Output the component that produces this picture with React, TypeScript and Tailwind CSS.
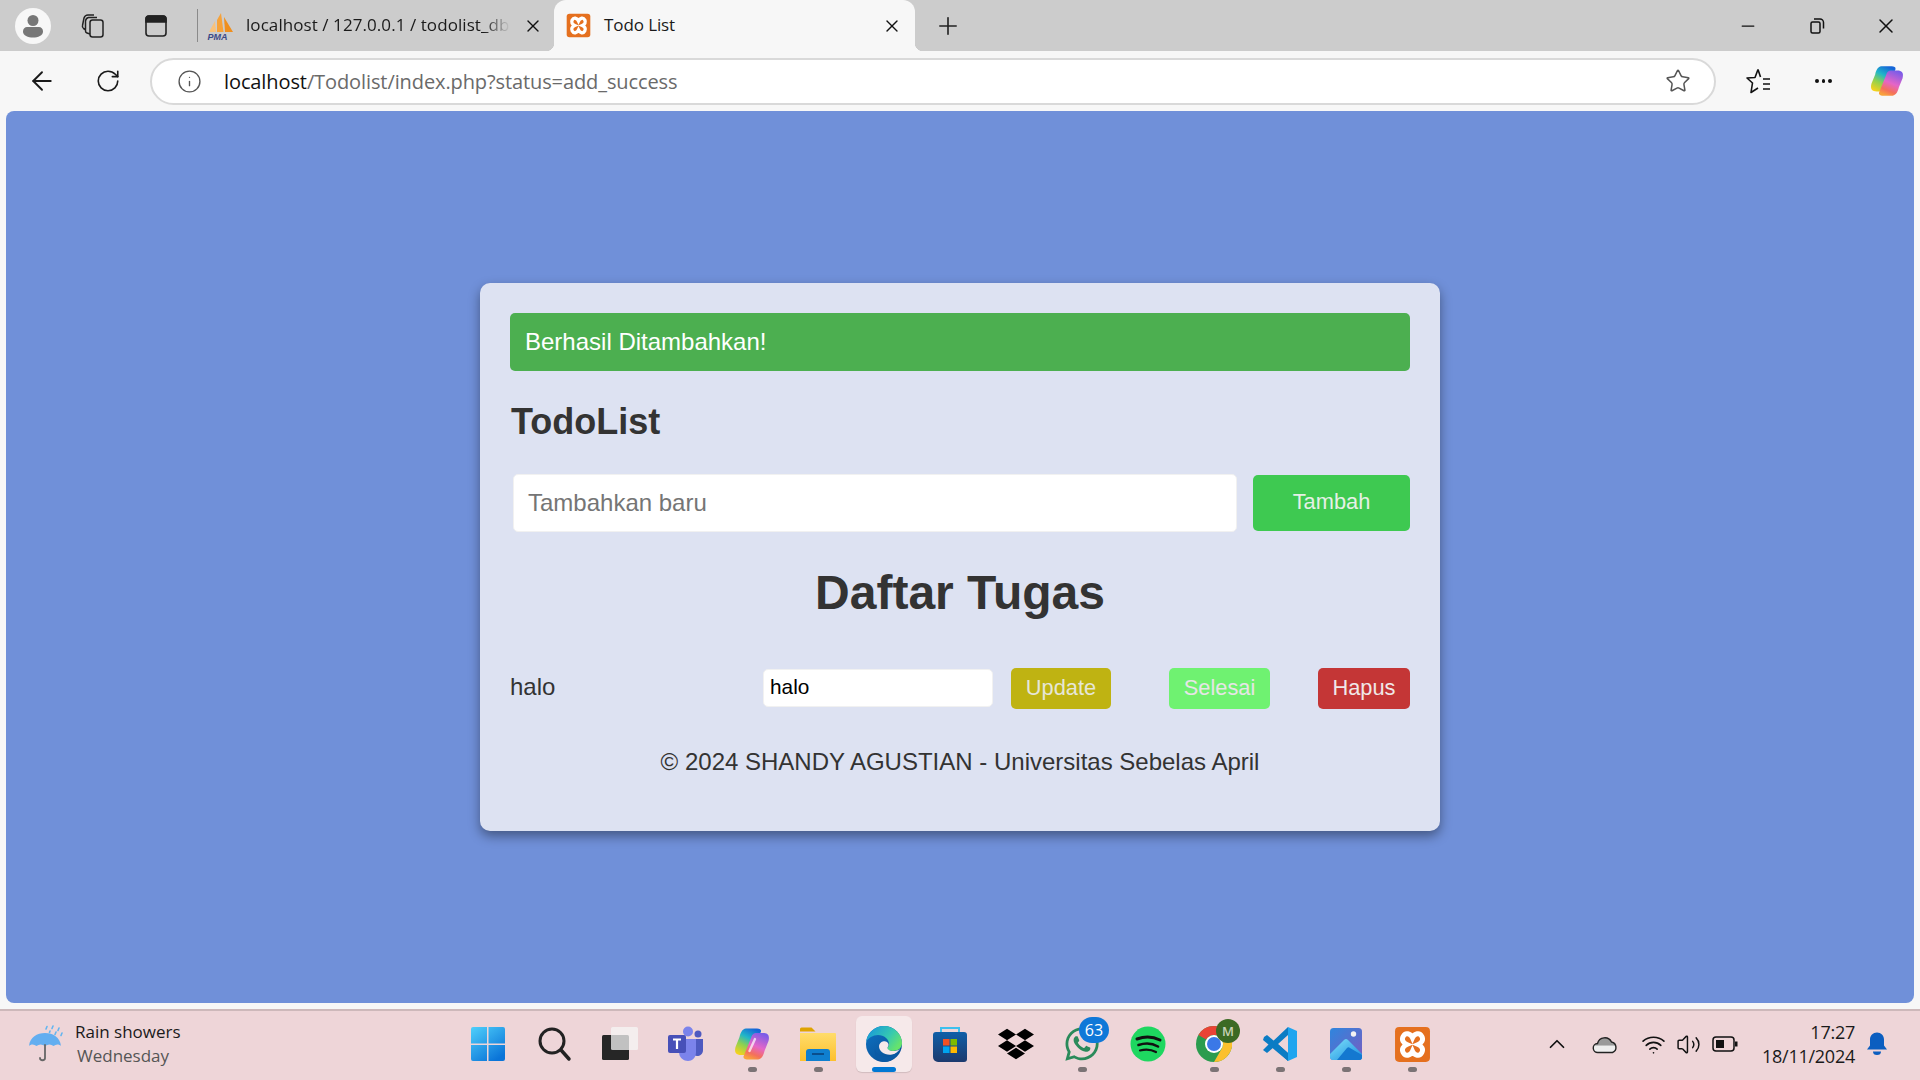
import React from "react";
import { ArrowLeft, RotateCw, Info, Star, Plus, X, Minus, ChevronUp, Wifi, Volume2 } from "lucide-react";
import { FaDropbox, FaWhatsapp } from "react-icons/fa";

const ui = "font-['Open_Sans',sans-serif]";

function Xampp({ s = 36, r = 4 }: { s?: number; r?: number }) {
  return (
    <svg width={s} height={s} viewBox="0 0 36 36">
      <rect x="1" y="1" width="34" height="34" rx={r} fill="#e5701f" />
      <path d="M9 10 C11 6 16 7 18 11.5 C20 7 25 6 27 10 C29 13.5 27 16.5 23.5 18 C27 19.5 29 22.5 27 26 C25 30 20 29 18 24.5 C16 29 11 30 9 26 C7 22.5 9 19.5 12.5 18 C9 16.5 7 13.5 9 10Z" fill="none" stroke="#fff" strokeWidth="4.800" />
    </svg>
  );
}

function Copilot({ s = 36, id = "c", stripe = true }: { s?: number; id?: string; stripe?: boolean }) {
  return (
    <svg width={s} height={s} viewBox="0 0 36 36">
      <defs>
        <linearGradient id={id + "a"} x1="0.7" y1="0" x2="0.2" y2="1">
          <stop offset="0" stopColor="#1565d8" />
          <stop offset="0.35" stopColor="#20b6c9" />
          <stop offset="0.65" stopColor="#8fd14f" />
          <stop offset="1" stopColor="#f7d21c" />
        </linearGradient>
        <linearGradient id={id + "b"} x1="0.7" y1="0" x2="0.3" y2="1">
          <stop offset="0" stopColor="#7a5ce8" />
          <stop offset="0.5" stopColor="#e565c8" />
          <stop offset="0.8" stopColor="#f4705c" />
          <stop offset="1" stopColor="#f9a23c" />
        </linearGradient>
      </defs>
      <path d="M12 2.500 C8 3 6.500 7 5.500 11 L1.500 21 C0 27 2.500 29 7 29 H13 C17 29 18 27 19 24 L27 5.500 C27.500 3.500 25.500 2.500 23 2.500 Z" fill={`url(#${id}a)`} />
      <path d="M24 33.500 C28 33 29.500 29 30.500 25 L34.500 15 C36 9 33.500 7 29 7 H23 C19 7 18 9 17 12 L9.500 30.500 C9 32.500 11 33.500 13 33.500 Z" fill={`url(#${id}b)`} />
      {stripe && <path d="M21 13 L15.500 25" stroke="#fff" strokeOpacity="0.7" strokeWidth="2.400" strokeLinecap="round" />}
    </svg>
  );
}

function Windows() {
  return (
    <svg width="36" height="36" viewBox="0 0 36 36">
      <defs>
        <linearGradient id="w" x1="0" y1="0" x2="0.7" y2="1">
          <stop offset="0" stopColor="#4fd0fb" />
          <stop offset="1" stopColor="#0a74d8" />
        </linearGradient>
      </defs>
      <path d="M1 3a2 2 0 0 1 2-2h14v16.500H1zM18.500 1H33a2 2 0 0 1 2 2v14.500H18.500zM1 19h16v16H3a2 2 0 0 1-2-2zM18.500 19H35v14a2 2 0 0 1-2 2H18.500z" fill="url(#w)" />
    </svg>
  );
}

function Search() {
  return (
    <svg width="36" height="36" viewBox="0 0 36 36">
      <circle cx="16" cy="15" r="12" fill="none" stroke="#222" strokeWidth="3" />
      <path d="M25 24 L33 33" stroke="#222" strokeWidth="3.500" strokeLinecap="round" />
    </svg>
  );
}

function TaskView() {
  return (
    <svg width="38" height="36" viewBox="0 0 38 36">
      <rect x="1" y="9" width="27" height="25" rx="1.500" fill="#262626" />
      <rect x="10" y="1" width="27" height="23" rx="1.500" fill="#f5f5f5" fillOpacity="0.75" />
    </svg>
  );
}

function Teams() {
  return (
    <svg width="38" height="36" viewBox="0 0 38 36">
      <circle cx="21" cy="5.500" r="5" fill="#7b83eb" />
      <circle cx="31" cy="8" r="3.500" fill="#4e5ac0" />
      <path d="M27 13h9v11c0 4-3 6-6 6-2 0-3-1-3-2z" fill="#4e5ac0" />
      <path d="M12 13h17v13c0 6-4 9-8 9s-9-3-9-9z" fill="#7b83eb" />
      <rect x="1" y="9" width="18" height="18" rx="2" fill="#4750b8" />
      <path d="M6 13.500h8M10 13.500v9.500" stroke="#fff" strokeWidth="2.200" fill="none" />
    </svg>
  );
}

function Folder() {
  return (
    <svg width="38" height="36" viewBox="0 0 38 36">
      <defs>
        <linearGradient id="f" x1="0" y1="0" x2="0" y2="1">
          <stop offset="0" stopColor="#ffdc6b" />
          <stop offset="1" stopColor="#fdc02d" />
        </linearGradient>
      </defs>
      <path d="M1 3a1.500 1.500 0 0 1 1.500-1.500h10l4 4H1z" fill="#dfa300" />
      <path d="M1 7h35a1 1 0 0 1 1 1v27H1z" fill="url(#f)" />
      <path d="M7 35v-9a3 3 0 0 1 3-3h18a3 3 0 0 1 3 3v9z" fill="#0f7fcf" />
      <rect x="13" y="27" width="12" height="2" fill="#0a4e8c" />
    </svg>
  );
}

function Edge() {
  return (
    <svg width="38" height="38" viewBox="0 0 38 38">
      <defs>
        <linearGradient id="e1" x1="0.1" y1="0.1" x2="1" y2="0.6">
          <stop offset="0" stopColor="#1a9bd8" />
          <stop offset="0.6" stopColor="#36c9b0" />
          <stop offset="1" stopColor="#66e36c" />
        </linearGradient>
        <linearGradient id="e2" x1="0" y1="0" x2="0.8" y2="1">
          <stop offset="0" stopColor="#0e74c5" />
          <stop offset="1" stopColor="#0a4e94" />
        </linearGradient>
      </defs>
      <circle cx="19" cy="19" r="18" fill="url(#e2)" />
      <path d="M19 1 C29 1 37 9 37 18 C37 23 33 26 28 26 C24 26 22 24.500 22 23.500 C22 22.500 24 22 24 19 C24 14 19 10 13 10 C8 10 3 13 1.200 17 C2 8 9.500 1 19 1Z" fill="url(#e1)" />
      <path d="M14 21 C15 16 20 15.500 22 17 C24 18.500 24 20.500 22.500 22.500 C22 24 24 26 28 26 C31 26 33 25.500 35 24 C33 28 30 29 27 29.500 C20 30.500 14 27 14 21Z" fill="#f6e9ea" />
      <path d="M18 37 C12 35 9 30 10 24 C11 29 16 32 22 31.500 C27 31 31 29 35 24 C32 33 25 37 19 37Z" fill="#0b5aa5" />
    </svg>
  );
}

function Store() {
  return (
    <svg width="36" height="38" viewBox="0 0 36 38">
      <defs>
        <linearGradient id="st" x1="0" y1="0" x2="0" y2="1">
          <stop offset="0" stopColor="#0f5fa8" />
          <stop offset="1" stopColor="#1c3a6e" />
        </linearGradient>
      </defs>
      <path d="M9 8V3h18v5" fill="none" stroke="#3ec0ee" strokeWidth="2" />
      <path d="M1 10a3 3 0 0 1 3-3h28a3 3 0 0 1 3 3v24a3 3 0 0 1-3 3H6a5 5 0 0 1-5-5z" fill="url(#st)" />
      <rect x="11" y="14" width="6.500" height="6.500" fill="#f25022" />
      <rect x="18.500" y="14" width="6.500" height="6.500" fill="#7fba00" />
      <rect x="11" y="21.500" width="6.500" height="6.500" fill="#00a4ef" />
      <rect x="18.500" y="21.500" width="6.500" height="6.500" fill="#ffb900" />
    </svg>
  );
}

function Spotify() {
  return (
    <svg width="36" height="36" viewBox="0 0 36 36">
      <circle cx="18" cy="18" r="17.500" fill="#1ed760" />
      <path d="M7 13 C15 10 23 10.500 30 14" fill="none" stroke="#111" strokeWidth="3" strokeLinecap="round" />
      <path d="M8.500 19 C15 16.800 22 17 28 20.500" fill="none" stroke="#111" strokeWidth="2.600" strokeLinecap="round" />
      <path d="M10 24.500 C15.500 23 21 23.300 26 26" fill="none" stroke="#111" strokeWidth="2.200" strokeLinecap="round" />
    </svg>
  );
}

function Chrome() {
  return (
    <svg width="36" height="36" viewBox="0 0 36 36">
      <circle cx="18" cy="18" r="18" fill="#2a9c4e" />
      <path d="M18 0a18 18 0 0 1 15.600 9H18a9 9 0 0 0-7.800 4.500L2.400 9A18 18 0 0 1 18 0z" fill="#ea4335" />
      <path d="M33.600 9A18 18 0 0 1 18 36l7.800-13.500A9 9 0 0 0 25.800 13.500z" fill="#fbc02d" />
      <circle cx="18" cy="18" r="9" fill="#fff" />
      <circle cx="18" cy="18" r="7" fill="#3b78e7" />
    </svg>
  );
}

function VSCode() {
  return (
    <svg width="36" height="36" viewBox="0 0 36 36">
      <path d="M26 1 L35 5 V31 L26 35 Z" fill="#1fa5ef" />
      <path d="M26 1 L8 18 L26 35 L26 27 L16 18 L26 9 Z" fill="#0b7cc4" />
      <path d="M2 11 L5 9 L26 27 V35 L1 14 Z" fill="#0b7cc4" />
      <path d="M1 24 L5 27 L13 20 L9 16 Z" fill="#0b7cc4" />
    </svg>
  );
}

function Photos() {
  return (
    <svg width="34" height="34" viewBox="0 0 34 34">
      <defs>
        <linearGradient id="p" x1="0" y1="0" x2="1" y2="1">
          <stop offset="0" stopColor="#2e86de" />
          <stop offset="1" stopColor="#7a5cc0" />
        </linearGradient>
        <linearGradient id="p2" x1="0" y1="0" x2="1" y2="1">
          <stop offset="0" stopColor="#7fe0fa" />
          <stop offset="1" stopColor="#1a8fe0" />
        </linearGradient>
      </defs>
      <rect x="1" y="1" width="32" height="32" rx="3.500" fill="url(#p)" />
      <circle cx="24.500" cy="7" r="2.700" fill="#f3f3f3" />
      <path d="M1 27 L15 13 a3 3 0 0 1 4 0 L33 27 V30 a3 3 0 0 1-3 3 H4 a3 3 0 0 1-3-3Z" fill="url(#p2)" />
      <path d="M8 33 L18 21 a2 2 0 0 1 3 0 L33 28 V30 a3 3 0 0 1-3 3Z" fill="#1478d0" />
    </svg>
  );
}

function Umbrella() {
  return (
    <svg width="38" height="38" viewBox="0 0 38 38">
      <path d="M1 21 C2 12 9 8 17 8 C25 8 32 12 33 21 C31 19 28 19 25.500 21 C23 19 20 19 17 21 C14 19 11 19 8.500 21 C6 19 3 19 1 21Z" fill="#63aef0" />
      <path d="M17 20 V33 C17 36 12 36 12 33" fill="none" stroke="#666" strokeWidth="1.800" strokeLinecap="round" />
      <path d="M19 1.500 L18 4 M25 1 L24 3.500 M31 3 L30 5.500 M22 6 L21.500 7.500 M28 7 L27 9.500 M34 8 L33 10.500" stroke="#64b5f0" strokeWidth="1.600" strokeLinecap="round" />
    </svg>
  );
}

function Pma() {
  return (
    <svg width="28" height="28" viewBox="0 0 28 28">
      <path d="M2 20 L8 9 L9 20Z" fill="#f9c27a" />
      <path d="M10 20 L10 8 L14 1 L16.500 20Z" fill="#f6a239" />
      <path d="M18 20 L17 5 L26 20Z" fill="#ef8f1e" />
      <text x="0.500" y="27.500" fontFamily="Liberation Sans, sans-serif" fontStyle="italic" fontWeight="700" fontSize="9" fill="#3c4a87">PMA</text>
    </svg>
  );
}

function Slot({ children, dot, active }: { children: React.ReactNode; dot?: boolean; active?: boolean }) {
  return (
    <div className="relative flex h-full w-[66px] items-center justify-center">
      {active && <div className="absolute left-[5px] top-[5px] h-[56px] w-[56px] rounded-[6px] bg-[#f6e9ea] shadow-[0_1px_1px_rgba(0,0,0,0.12)]" />}
      <div className="relative flex">{children}</div>
      {dot && <div className="absolute bottom-[5px] left-[29px] h-[5px] w-[9px] rounded-full bg-[#7b7375]" />}
      {active && <div className="absolute bottom-[5px] left-[21px] h-[5px] w-[24px] rounded-full bg-[#0078d4]" />}
    </div>
  );
}

export default function App() {
  return (
    <div className={`flex h-[1080px] w-[1920px] flex-col overflow-hidden bg-[#f7f7f7] ${ui}`}>
      {/* title bar */}
      <div className="flex h-[51px] shrink-0 items-center bg-[#cccccc] text-[#1a1a1a]">
        <div className="ml-[15px] flex h-[36px] w-[36px] items-center justify-center rounded-full bg-[#f7f7f7]">
          <svg width="24" height="26" viewBox="0 0 24 26">
            <circle cx="12" cy="7.500" r="5.500" fill="#777" />
            <path d="M2 18.500c0-3 2-4.500 4-4.500h12c2 0 4 1.500 4 4.500 0 4-5 6-10 6s-10-2-10-6z" fill="#777" />
          </svg>
        </div>
        <div className="flex w-[84px] justify-center">
          <svg width="26" height="26" viewBox="0 0 26 26" fill="none" stroke="#222" strokeWidth="1.500">
            <rect x="10" y="7" width="13" height="17" rx="2.500" />
            <path d="M10 21 L7 20 Q5.500 19.500 5.500 18 L5.500 8 Q6 5 8.500 4.500 L17 4.500 M6 17 L3.500 15.500 Q2 14.500 2.500 12.500 L4 5 Q5 2 8 2 L14 2" />
          </svg>
        </div>
        <div className="flex w-[42px] justify-center">
          <svg width="24" height="24" viewBox="0 0 24 24" fill="none" stroke="#222" strokeWidth="1.600">
            <rect x="2" y="2" width="20" height="20" rx="3" />
            <path d="M2 8h20V5a3 3 0 0 0-3-3H5a3 3 0 0 0-3 3z" fill="#222" />
          </svg>
        </div>
        <div className="ml-[20px] h-[33px] w-px bg-[#8a8a8a]" />
        <div className="flex h-full w-[356px] items-center">
          <div className="ml-[9px] flex w-[28px]"><Pma /></div>
          <div className="ml-[11px] mb-[2px] w-[264px] overflow-hidden whitespace-nowrap text-[17px] leading-[24px] tracking-[0.07px] [mask-image:linear-gradient(to_right,black_90%,transparent_100%)]">localhost / 127.0.0.1 / todolist_db</div>
          <X size={20} strokeWidth={1.6} className="ml-[13px] text-[#111]" />
        </div>
        <div className="relative flex h-full w-[361px] items-center rounded-t-[12px] bg-[#f7f7f7]">
          <div className="absolute bottom-0 left-[-8px] h-[8px] w-[8px] bg-[radial-gradient(circle_at_0_0,transparent_8px,#f7f7f7_8.5px)]" />
          <div className="absolute bottom-0 right-[-8px] h-[8px] w-[8px] bg-[radial-gradient(circle_at_100%_0,transparent_8px,#f7f7f7_8.5px)]" />
          <div className="ml-[12px] flex"><Xampp s={25} r={4} /></div>
          <div className="ml-[13px] mb-[2px] text-[17px] leading-[24px] tracking-[-0.1px]">Todo List</div>
          <X size={20} strokeWidth={1.6} className="ml-auto mr-[13px] text-[#111]" />
        </div>
        <div className="flex w-[66px] justify-center">
          <Plus size={28} strokeWidth={1.4} className="text-[#222]" />
        </div>
        <div className="flex-1" />
        <div className="flex w-[69px] justify-center"><Minus size={20} strokeWidth={1.5} className="text-[#111]" /></div>
        <div className="flex w-[69px] justify-center">
          <svg width="18" height="18" viewBox="0 0 18 18" fill="none" stroke="#111" strokeWidth="1.500">
            <rect x="3" y="5" width="9" height="11" rx="1.500" />
            <path d="M6 2h6a3.500 3.500 0 0 1 3.500 3.500v6" />
          </svg>
        </div>
        <div className="flex w-[69px] justify-center"><X size={24} strokeWidth={1.5} className="text-[#111]" /></div>
      </div>

      {/* toolbar */}
      <div className="flex h-[60px] shrink-0 items-center bg-[#f7f7f7] pl-[9px]">
        <div className="flex w-[66px] justify-center"><ArrowLeft size={30} strokeWidth={1.5} className="text-[#1a1a1a]" /></div>
        <div className="flex w-[66px] justify-center"><RotateCw size={26} strokeWidth={1.5} className="text-[#1a1a1a]" /></div>
        <div className="ml-[9px] flex h-[47px] w-[1566px] items-center rounded-full border-2 border-[#d9d9d9] bg-white">
          <Info size={25} strokeWidth={1.3} className="ml-[25px] text-[#555]" />
          <div className="ml-[22px] mt-px whitespace-nowrap text-[20px] leading-[28px] tracking-[-0.1px] text-[#6a6a6a]"><span className="text-[#111]">localhost</span>/Todolist/index.php?status=add_success</div>
          <Star size={26} strokeWidth={1.4} className="ml-auto mr-[23px] text-[#555]" />
        </div>
        <div className="ml-[8px] flex w-[67px] justify-center">
          <svg width="28" height="28" viewBox="0 0 28 28" fill="none" stroke="#111" strokeWidth="1.600" strokeLinejoin="round">
            <path d="M14 2.500 L11 10.500 L3 11 L8.500 16 L7 25.500 L14 21 M14 2.500 L16.500 10 M19 12h7M19 17h7M19 22h7" />
          </svg>
        </div>
        <div className="flex w-[65px] items-center justify-center gap-[3px]">
          <div className="h-[3.500px] w-[3.500px] rounded-full bg-[#111]" />
          <div className="h-[3.500px] w-[3.500px] rounded-full bg-[#111]" />
          <div className="h-[3.500px] w-[3.500px] rounded-full bg-[#111]" />
        </div>
        <div className="flex w-[62px] justify-center"><Copilot s={34} id="tb" stripe={false} /></div>
      </div>

      {/* page */}
      <div className="flex h-[892px] shrink-0 items-center justify-center rounded-[8px] bg-[#7090d9] mx-[6px] font-['Liberation_Sans',sans-serif]">
        <div className="mb-[1px] flex w-[960px] flex-col rounded-[10px] bg-[#dde2f2] px-[30px] pt-[30px] pb-[55px] text-[#333] shadow-[0_5px_12px_rgba(0,0,0,0.4)]">
          <div className="flex h-[58px] items-center rounded-[5px] bg-[#4caf50] px-[15px] text-[24px] text-white">Berhasil Ditambahkan!</div>
          <h2 className="ml-px mt-[29px] text-[36px] leading-[44px] font-bold">TodoList</h2>
          <div className="mt-[30px] ml-[3px] flex items-center">
            <div className="flex h-[58px] w-[724px] items-center rounded-[5px] border border-[#f1f1f1] bg-white px-[14px] text-[24px] text-[#757575]">Tambahkan baru</div>
            <button className="ml-[16px] h-[56px] w-[157px] rounded-[5px] bg-[#3ec951] text-[21.800px] text-[#e6f0e6]">Tambah</button>
          </div>
          <h1 className="mt-[32px] text-center text-[48px] leading-[58px] font-bold">Daftar Tugas</h1>
          <div className="mt-[46px] flex items-center">
            <div className="mb-[2px] flex-1 text-[24px] leading-[28px]">halo</div>
            <div className="flex h-[38px] w-[230px] items-center rounded-[5px] border border-[#f1f1f1] bg-white px-[6px] pb-[2px] text-[20.800px] text-black">halo</div>
            <button className="ml-[18px] h-[41px] w-[100px] rounded-[5px] bg-[#bfb312] text-[21.800px] text-[#e6e6d8]">Update</button>
            <button className="ml-[58px] h-[41px] w-[101px] rounded-[5px] bg-[#6ff271] text-[21.800px] text-[#e6e6e6]">Selesai</button>
            <button className="ml-[48px] h-[41px] w-[92px] rounded-[5px] bg-[#c43636] text-[21.800px] text-[#f0e8e8]">Hapus</button>
          </div>
          <p className="mt-[39px] text-center text-[24px] leading-[28px]">© 2024 SHANDY AGUSTIAN - Universitas Sebelas April</p>
        </div>
      </div>

      {/* taskbar */}
      <div className="mt-[6px] flex h-[71px] shrink-0 border-t-2 border-[#cdb8ba] bg-[#eed5d8] pb-[3px] text-[#1a1a1a]">
        <div className="flex w-[455px] items-center pl-[28px]">
          <Umbrella />
          <div className="ml-[9px] flex flex-col">
            <div className="text-[17px] leading-[24px] tracking-[0px]">Rain showers</div>
            <div className="ml-[2px] text-[17px] leading-[24px] tracking-[0px] text-[#555]">Wednesday</div>
          </div>
        </div>
        <div className="flex w-[990px]">
          <Slot><Windows /></Slot>
          <Slot><Search /></Slot>
          <Slot><TaskView /></Slot>
          <Slot><Teams /></Slot>
          <Slot dot><Copilot id="tk" /></Slot>
          <Slot dot><Folder /></Slot>
          <Slot active><Edge /></Slot>
          <Slot><Store /></Slot>
          <Slot><FaDropbox size={36} className="text-black" /></Slot>
          <Slot dot>
            <FaWhatsapp size={38} className="text-[#2a8a5a]" />
            <div className="absolute left-[16px] top-[-8px] flex h-[26px] w-[30px] items-center justify-center rounded-full bg-[#0f78d8] text-[16px] leading-none text-white">63</div>
          </Slot>
          <Slot><Spotify /></Slot>
          <Slot dot>
            <Chrome />
            <div className="absolute left-[20px] top-[-7px] flex h-[24px] w-[24px] items-center justify-center rounded-full bg-[#3c6a24] text-[13px] font-semibold leading-none text-[#c8d2b8]">M</div>
          </Slot>
          <Slot dot><VSCode /></Slot>
          <Slot dot><Photos /></Slot>
          <Slot dot><Xampp s={37} r={4} /></Slot>
        </div>
        <div className="flex flex-1 items-center">
          <ChevronUp size={26} strokeWidth={1.6} className="ml-[99px] text-[#111]" />
          <svg className="ml-[22px]" width="26" height="20" viewBox="0 0 26 20">
            <defs>
              <linearGradient id="cl" x1="0" y1="0" x2="0" y2="1">
                <stop offset="0.5" stopColor="#9a9a9a" />
                <stop offset="0.55" stopColor="#eeeeee" />
              </linearGradient>
            </defs>
            <path d="M6 18.500a4.500 4.500 0 0 1-.500-9 7.500 7.500 0 0 1 14-1.500 5.500 5.500 0 0 1 1 10.500z" fill="url(#cl)" stroke="#222" strokeWidth="1.400" />
          </svg>
          <Wifi size={25} strokeWidth={1.6} className="ml-[23px] text-[#111]" />
          <Volume2 size={25} strokeWidth={1.4} className="ml-[10px] text-[#111]" />
          <svg className="ml-[11px]" width="26" height="18" viewBox="0 0 26 18" fill="none">
            <rect x="1" y="2" width="21" height="14" rx="3" stroke="#111" strokeWidth="1.500" />
            <rect x="4" y="5" width="8" height="8" fill="#111" />
            <rect x="23" y="6.500" width="2.500" height="5" fill="#111" />
          </svg>
          <div className="ml-[-1px] flex w-[118px] flex-col items-end text-[18px] leading-[24px] tracking-[-0.25px]">
            <div>17:27</div>
            <div>18/11/2024</div>
          </div>
          <svg className="ml-[10px]" width="24" height="26" viewBox="0 0 24 26">
            <path d="M12 1.500c-4 0-7 3-7 7v6l-3 4h20l-3-4v-6c0-4-3-7-7-7z" fill="#0b5ec0" />
            <path d="M8 20.500h8a4 3.500 0 0 1-8 0z" fill="#0b5ec0" />
          </svg>
        </div>
      </div>
    </div>
  );
}
